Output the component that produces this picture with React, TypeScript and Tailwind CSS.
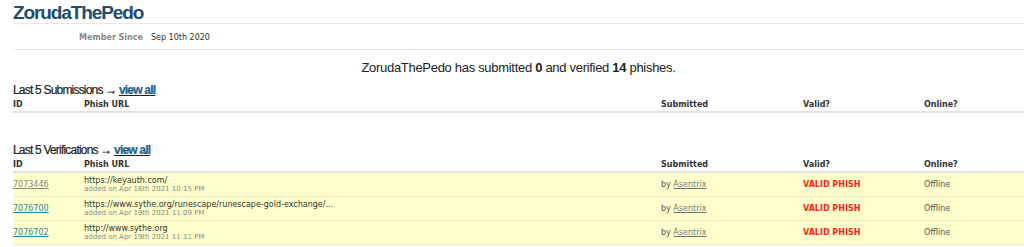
import React from "react";

const verdana = "font-['DejaVu_Sans',Verdana,sans-serif]";
const narrow = "font-['Liberation_Sans',Arial,sans-serif]";

type Row = { id: string; visited?: boolean; url: string; added: string };

const rows: Row[] = [
	{ id: "7073446", visited: true, url: "https://keyauth.com/", added: "added on Apr 16th 2021 10:15 PM" },
	{ id: "7076700", url: "https://www.sythe.org/runescape/runescape-gold-exchange/...", added: "added on Apr 19th 2021 11:09 PM" },
	{ id: "7076702", url: "http://www.sythe.org", added: "added on Apr 19th 2021 11:11 PM" },
];

const HeaderRow = () => (
	<div className={`flex h-[14px] items-center text-[8px] font-bold text-[#333] border-b-2 border-[#e2e2e2] ${verdana}`}>
		<div className="w-[71px]">ID</div>
		<div className="w-[577px]">Phish URL</div>
		<div className="w-[142px]">Submitted</div>
		<div className="w-[121px]">Valid?</div>
		<div>Online?</div>
	</div>
);

const SectionTitle = ({ label }: { label: string }) => (
	<div className={`text-[12px] tracking-[-0.8px] text-[#222] [-webkit-text-stroke:0.2px_#222] ${narrow}`}>
		{label} → <a className="text-[#1a6fa3] font-bold underline">view all</a>
	</div>
);

const App = () => {
	return (
		<div className="w-[1024px] h-[247px] overflow-hidden bg-white">
			<div className="ml-[13px] w-[1100px]">
				<h1 className={`pt-[3px] h-[23px] text-[19px] leading-[19px] font-bold tracking-[-1.1px] text-[#1d4d6f] ${narrow}`}>
					ZorudaThePedo
				</h1>
				<div className="border-t border-[#e8e8e8]" />
				<div className={`flex h-[25px] items-center pt-[2px] text-[8px] ${verdana}`}>
					<span className="ml-[66px] w-[72px] font-bold text-[#888]">Member Since</span>
					<span className="text-[#333]">Sep 10th 2020</span>
				</div>
				<div className="border-t border-[#e8e8e8]" />

				<div className={`w-[1011px] pt-[8px] h-[31px] text-center text-[13px] tracking-[-0.3px] text-[#222] ${narrow}`}>
					ZorudaThePedo has submitted <b>0</b> and verified <b>14</b> phishes.
				</div>

				<SectionTitle label="Last 5 Submissions" />
				<HeaderRow />

				<div className="h-[28px]" />
				<SectionTitle label="Last 5 Verifications" />
				<HeaderRow />

				{rows.map((r) => (
					<div
						key={r.id}
						className={`flex h-[24px] items-center bg-[#ffffcc] border-b border-[#eeeecc] text-[8px] ${verdana}`}
					>
						<div className="w-[71px]">
							<a className={`underline ${r.visited ? "text-[#888]" : "text-[#2a80b0]"}`}>{r.id}</a>
						</div>
						<div className="w-[577px] leading-[9px]">
							<div className="text-[#333]">{r.url}</div>
							<div className="text-[7px] text-[#888]">{r.added}</div>
						</div>
						<div className="w-[142px] text-[#555]">
							by <a className="underline text-[#777]">Asentrix</a>
						</div>
						<div className="w-[121px] font-bold text-[#ff2020]">VALID PHISH</div>
						<div className="text-[#555]">Offline</div>
					</div>
				))}
			</div>
		</div>
	);
};

export default App;
